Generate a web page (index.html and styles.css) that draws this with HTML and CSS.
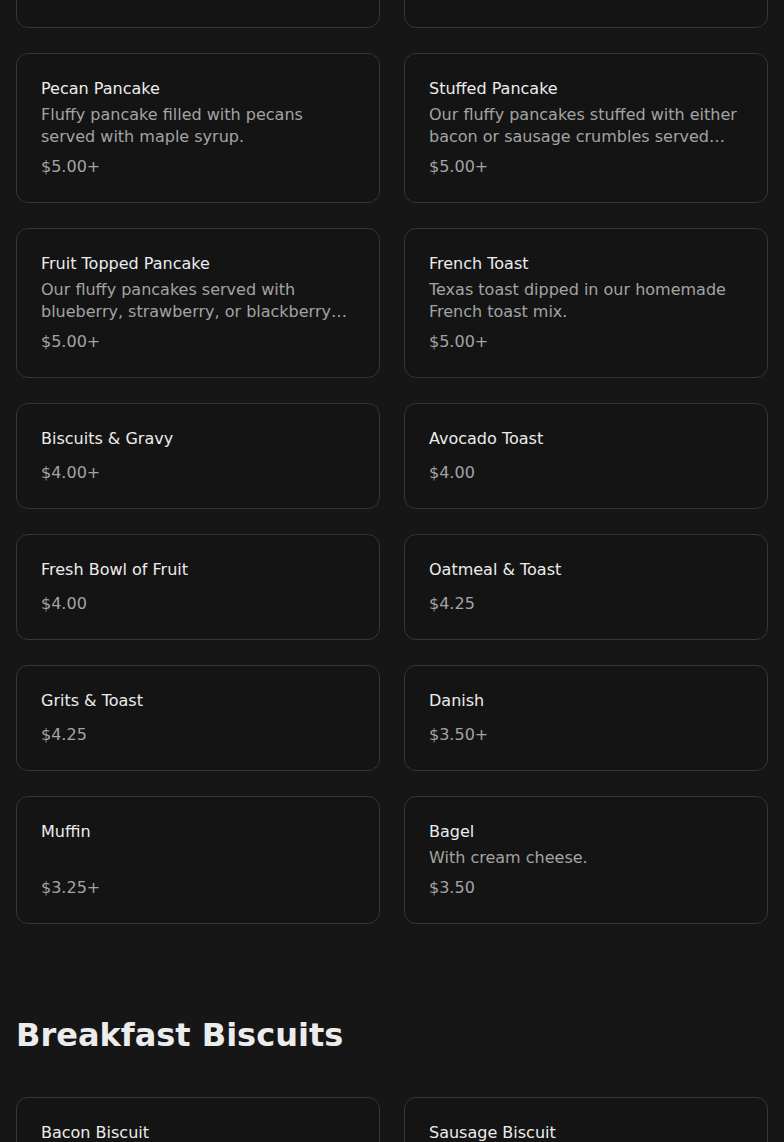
FILE: index.html
```html
<!DOCTYPE html>
<html lang="en">
<head>
<meta charset="utf-8">
<title>Menu</title>
<link rel="stylesheet" href="styles.css">
</head>
<body>
<main class="menu">
  <section class="section section-first">
    <div class="grid">
      <div class="card">
        <div class="item-name">Chocolate Chip Pancake</div>
        <div class="item-desc">Our fluffy pancakes filled with chocolate chips served with maple syrup.</div>
        <div class="item-price">$5.00+</div>
      </div>
      <div class="card">
        <div class="item-name">Blueberry Pancake</div>
        <div class="item-desc">Fluffy pancake filled with blueberries served with maple syrup.</div>
        <div class="item-price">$5.00+</div>
      </div>
      <div class="card">
        <div class="item-name">Pecan Pancake</div>
        <div class="item-desc">Fluffy pancake filled with pecans served with maple syrup.</div>
        <div class="item-price">$5.00+</div>
      </div>
      <div class="card">
        <div class="item-name">Stuffed Pancake</div>
        <div class="item-desc">Our fluffy pancakes stuffed with either bacon or sausage crumbles served with maple syrup.</div>
        <div class="item-price">$5.00+</div>
      </div>
      <div class="card">
        <div class="item-name">Fruit Topped Pancake</div>
        <div class="item-desc">Our fluffy pancakes served with blueberry, strawberry, or blackberry topping and whipped cream.</div>
        <div class="item-price">$5.00+</div>
      </div>
      <div class="card">
        <div class="item-name">French Toast</div>
        <div class="item-desc">Texas toast dipped in our homemade French toast mix.</div>
        <div class="item-price">$5.00+</div>
      </div>
      <div class="card">
        <div class="item-name">Biscuits &amp; Gravy</div>
        <div class="item-price">$4.00+</div>
      </div>
      <div class="card">
        <div class="item-name">Avocado Toast</div>
        <div class="item-price">$4.00</div>
      </div>
      <div class="card">
        <div class="item-name">Fresh Bowl of Fruit</div>
        <div class="item-price">$4.00</div>
      </div>
      <div class="card">
        <div class="item-name">Oatmeal &amp; Toast</div>
        <div class="item-price">$4.25</div>
      </div>
      <div class="card">
        <div class="item-name">Grits &amp; Toast</div>
        <div class="item-price">$4.25</div>
      </div>
      <div class="card">
        <div class="item-name">Danish</div>
        <div class="item-price">$3.50+</div>
      </div>
      <div class="card">
        <div class="item-name">Muffin</div>
        <div class="item-price">$3.25+</div>
      </div>
      <div class="card">
        <div class="item-name">Bagel</div>
        <div class="item-desc">With cream cheese.</div>
        <div class="item-price">$3.50</div>
      </div>
    </div>
  </section>
  <section class="section">
    <h2 class="section-title">Breakfast Biscuits</h2>
    <div class="grid">
      <div class="card">
        <div class="item-name">Bacon Biscuit</div>
        <div class="item-price">$4.50</div>
      </div>
      <div class="card">
        <div class="item-name">Sausage Biscuit</div>
        <div class="item-price">$4.50</div>
      </div>
    </div>
  </section>
</main>
</body>
</html>
```
FILE: styles.css
```css
html, body {
  margin: 0;
  padding: 0;
  background: #161616;
  overflow: hidden;
}
body {
  font-family: "DejaVu Sans", sans-serif;
  color: #ececec;
  height: 1142px;
}
.menu {
  padding: 0 16px;
  margin-top: -122px;
}
.section + .section {
  margin-top: 91px;
}
.section-title {
  margin: 0 0 42px 0;
  font-size: 32px;
  line-height: 40px;
  font-weight: 700;
  color: #ececec;
}
.grid {
  display: grid;
  grid-template-columns: 1fr 1fr;
  gap: 25px 24px;
}
.card {
  display: flex;
  flex-direction: column;
  padding: 24px;
  border: 1px solid #363636;
  border-radius: 12px;
  background: #141414;
}
.item-name {
  font-size: 16px;
  line-height: 22px;
  color: #ececec;
}
.item-desc {
  margin-top: 4px;
  font-size: 16px;
  line-height: 22px;
  color: #a3a3a3;
  display: -webkit-box;
  -webkit-line-clamp: 2;
  -webkit-box-orient: vertical;
  overflow: hidden;
}
.item-price {
  margin-top: auto;
  padding-top: 8px;
  font-size: 16px;
  line-height: 22px;
  color: #a3a3a3;
}
.item-name + .item-price {
  padding-top: 12px;
}
```
